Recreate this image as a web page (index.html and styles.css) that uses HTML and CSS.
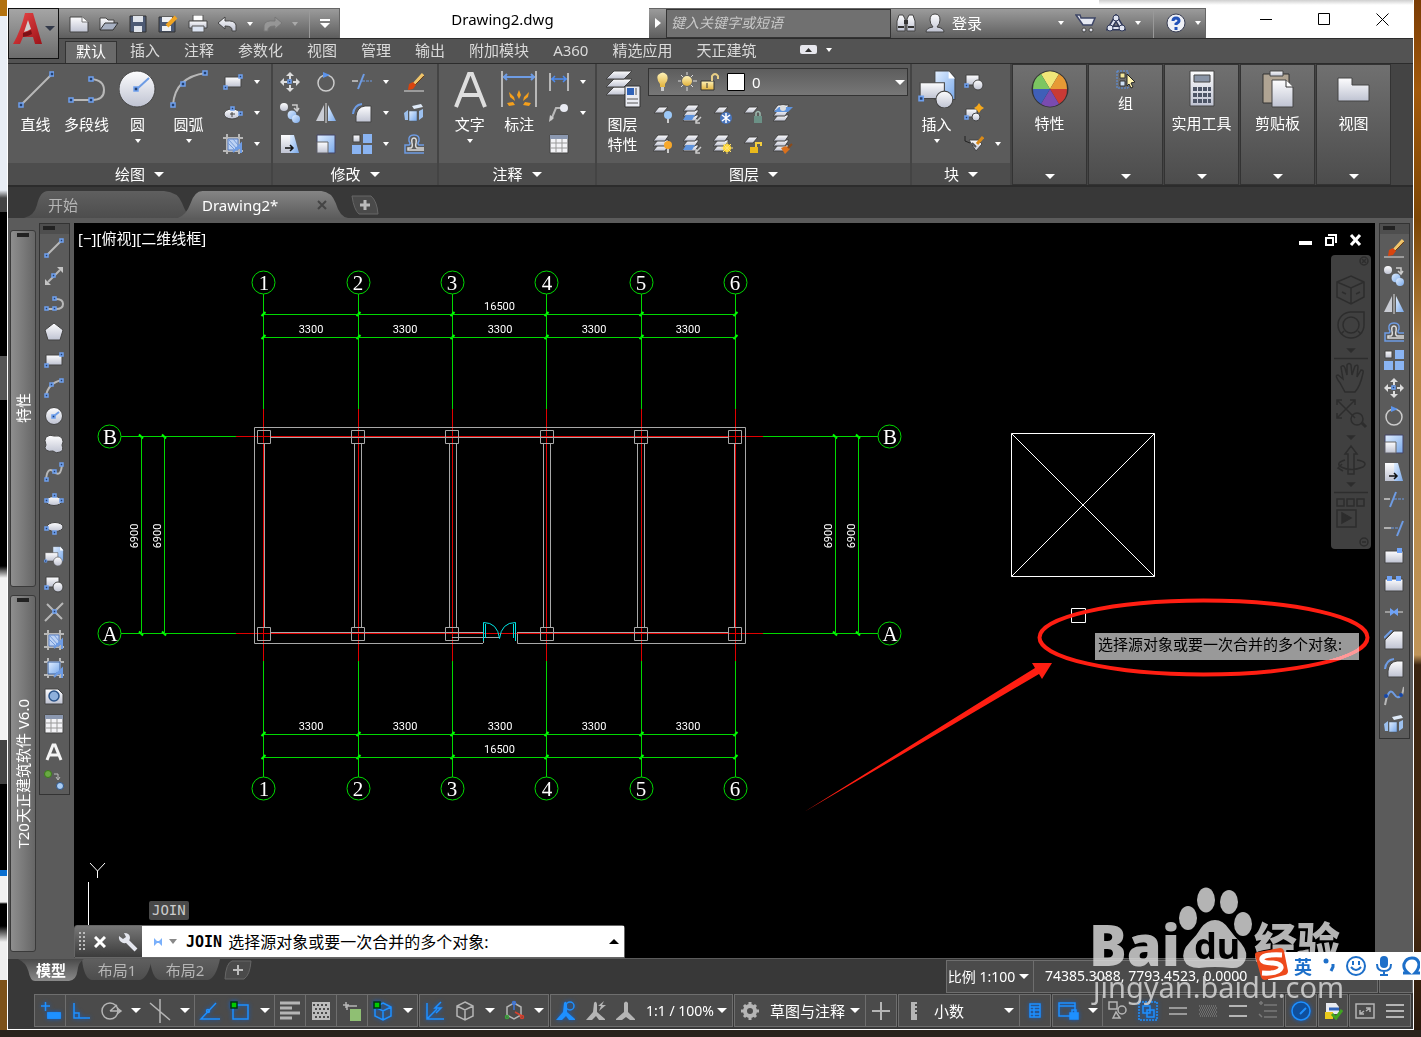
FILE: index.html
```html
<!doctype html>
<html lang="zh-CN">
<head>
    <meta charset="UTF-8">
    <title>Drawing2.dwg</title>
    <link rel="stylesheet" href="styles.css">
</head>
<body>
<!-- icon sprite -->
<svg class="sprite" aria-hidden="true">
    <defs>
        <linearGradient id="silver" x1="0" y1="0" x2="0" y2="1"><stop offset="0" stop-color="#fdfdfe"/><stop offset="1" stop-color="#bfc3d2"/></linearGradient>
        <linearGradient id="blue" x1="0" y1="0" x2="1" y2="1"><stop offset="0" stop-color="#e2efff"/><stop offset="1" stop-color="#78a8ea"/></linearGradient>
        <linearGradient id="gold" x1="0" y1="0" x2="0" y2="1"><stop offset="0" stop-color="#fff3b8"/><stop offset="1" stop-color="#e2b23c"/></linearGradient>
        <linearGradient id="red" x1="0" y1="0" x2="1" y2="1"><stop offset="0" stop-color="#ee4a4a"/><stop offset="1" stop-color="#9c1218"/></linearGradient>
        <linearGradient id="tabOn" x1="0" y1="0" x2="0" y2="1"><stop offset="0" stop-color="#858585"/><stop offset="1" stop-color="#5c5c5c"/></linearGradient>
        <linearGradient id="tabOff" x1="0" y1="0" x2="0" y2="1"><stop offset="0" stop-color="#5f5f5f"/><stop offset="1" stop-color="#4d4d4d"/></linearGradient>
        <linearGradient id="modelOn" x1="0" y1="0" x2="0" y2="1"><stop offset="0" stop-color="#4a4a4a"/><stop offset="1" stop-color="#8a8a8a"/></linearGradient>
    </defs>
    <!-- draw -->
    <symbol id="line" viewBox="0 0 20 20"><path class="w" d="M2 18L18 2"/><path class="h" d="M1 16h3v3h-3zM16 1h3v3h-3z"/></symbol>
    <symbol id="xline" viewBox="0 0 20 20"><path class="w" d="M4 16L16 4"/><path fill="#c4c4c4" d="M1 13v6h6zM19 1v6L13 1z"/><path class="h" d="M8 8h3v3h-3z"/></symbol>
    <symbol id="pline" viewBox="0 0 20 20"><path class="w" d="M2 15h10q7 0 7-5t-7-5"/><path class="h" d="M1 13h3v3h-3zM9 13h3v3h-3zM9 3h3v3h-3z"/></symbol>
    <symbol id="polygon" viewBox="0 0 20 20"><path class="s" d="M10 1l9 7-3 10H4L1 8z"/></symbol>
    <symbol id="rect" viewBox="0 0 20 20"><path class="s" d="M2 5h16v10H2z"/><path class="h" d="M1 14h3v3h-3zM16 3h3v3h-3z"/></symbol>
    <symbol id="arc" viewBox="0 0 20 20"><path class="w" d="M2 18Q4 5 18 2"/><path class="h" d="M1 16h3v3h-3zM6 5h3v3h-3zM16 1h3v3h-3z"/></symbol>
    <symbol id="circle" viewBox="0 0 20 20"><circle class="s" cx="10" cy="10" r="8.500"/><path class="b" d="M10 10l5-4"/><path class="h" d="M8 9h3v3h-3z"/></symbol>
    <symbol id="cloud" viewBox="0 0 20 20"><path class="s" d="M2 3q4-3 8-1 6-1 8 2 2 4 0 7 2 6-2 7-4 2-7-1-4 1-7-1-2-2 0-5-2-5 0-8z"/></symbol>
    <symbol id="spline" viewBox="0 0 20 20"><path class="w" d="M2 18Q3 5 9 9q8 8 9-7"/><path class="h" d="M1 16h3v3h-3zM9 8h3v3h-3zM16 1h3v3h-3z"/></symbol>
    <symbol id="ellipse" viewBox="0 0 20 20"><ellipse class="s" cx="10" cy="11" rx="8" ry="4.500"/><path class="h" d="M1 9h3v3h-3zM16 9h3v3h-3zM9 4h3v3h-3z"/></symbol>
    <symbol id="centre" viewBox="0 0 20 20"><ellipse class="s" cx="9" cy="11" rx="8" ry="5"/><path class="h" d="M8 4h3v3h-3zM16 9h3v3h-3z"/><path stroke="#444" d="M7 11h5M9 9v5"/></symbol>
    <symbol id="earc" viewBox="0 0 20 20"><ellipse class="s" cx="11" cy="9" rx="8" ry="4.500"/><path class="h" d="M1 9h3v3h-3zM9 13h3v3h-3z"/></symbol>
    <symbol id="insert" viewBox="0 0 36 36"><path fill="url(#blue)" stroke="#444" d="M16 1h13l6 6v21H16z"/><path fill="#fff" d="M29 1v7h6z"/><path class="s" d="M2 12h23v15H2z"/><circle class="s" cx="25" cy="28" r="8"/><path class="h" d="M1 25h4v4h-4z"/></symbol>
    <symbol id="block" viewBox="0 0 20 20"><path class="s" d="M2 3h13v10H2z"/><circle class="s" cx="14" cy="13" r="5"/><path class="h" d="M1 12h3v3h-3z"/></symbol>
    <symbol id="newblock" viewBox="0 0 20 20"><path class="s" d="M2 6h11v8H2z"/><circle class="s" cx="12" cy="14" r="4"/><path class="h" d="M1 13h3v3h-3z"/><path fill="#f6a91c" d="M15 0l2 3 3 2-3 2-2 3-2-3-3-2 3-2z"/></symbol>
    <symbol id="attr" viewBox="0 0 20 20"><path class="s" d="M5 6l9 0 4 4-6 7z"/><path fill="none" stroke="#222" d="M1 2v5l5 2"/><path stroke="#555" stroke-width="2" d="M8 9l4 4"/><path stroke="#d98a18" stroke-width="3" d="M19 3l-6 7"/></symbol>
    <symbol id="point" viewBox="0 0 20 20"><path class="w" d="M1 19L19 1M3 2l15 15"/><path class="h" d="M9 8h3v3h-3z"/></symbol>
    <symbol id="hatch" viewBox="0 0 20 20"><path class="w" d="M4 0v20M16 0v20M0 4h20M0 17h20"/><path fill="#bcd2f4" stroke="#587fc4" d="M5 5h10v11H5z"/><path stroke="#7399d8" d="M5 9l7 7M5 5l10 11M10 5l5 6"/><path class="b" d="M10 18l8-8v9M12 14l7 0"/></symbol>
    <symbol id="gradient" viewBox="0 0 20 20"><path class="w" d="M4 0v20M16 0v20M0 4h20M0 17h20"/><path fill="url(#blue)" stroke="#395e9c" d="M4 4h12v12H4z"/><path class="b" d="M10 19l8-8v9M12 15h7"/></symbol>
    <symbol id="region" viewBox="0 0 20 20"><path class="s" d="M1 3h13l5 5v10H1z"/><circle cx="10" cy="10" r="5" fill="#8eb0dc" stroke="#2c5489" stroke-width="1.500"/></symbol>
    <symbol id="table" viewBox="0 0 20 20"><path fill="#f3f3f6" stroke="#444" d="M1 1h18v18H1z"/><path fill="#8b98b0" d="M1 1h18v4H1z"/><path stroke="#999" d="M1 9h18M1 14h18M7 5v14M13 5v14"/></symbol>
    <symbol id="mtext" viewBox="0 0 20 20"><path fill="none" stroke="#f4f4f4" stroke-width="3" d="M3 18L9 3h2l6 15M6 13h8"/></symbol>
    <symbol id="addsel" viewBox="0 0 20 20"><circle cx="4" cy="4" r="3.500" fill="#6aa943" stroke="#3b7a1c"/><circle cx="16" cy="16" r="3.500" fill="#a9cdf5" stroke="#2c5489"/><path fill="none" stroke="#bbb" d="M10 4h4v5M12 7l2 3 2-3"/></symbol>
    <!-- modify -->
    <symbol id="erase" viewBox="0 0 20 20"><path stroke="#f0c56a" stroke-width="3" d="M19 2l-9 10"/><path stroke="#6e3d12" d="M20 4l-9 9"/><path fill="#d8440e" d="M5 12l4-2 3 3-3 4-5 1z"/><path stroke="#ddd" d="M0 19h20"/></symbol>
    <symbol id="copy" viewBox="0 0 20 20"><circle cx="4" cy="4" r="4" fill="url(#silver)"/><circle cx="12" cy="12" r="5" fill="url(#blue)" stroke="#555"/><circle cx="16" cy="16" r="4" fill="url(#blue)"/><path fill="none" stroke="#ccc" stroke-width="1.500" d="M12 2h5v5M14 5l3 3 2-3"/></symbol>
    <symbol id="mirror" viewBox="0 0 20 20"><path fill="#c9ccd4" d="M8 2v16H0z"/><path fill="url(#blue)" d="M12 2v16h8z"/><path stroke="#ddd" d="M10 0v20"/></symbol>
    <symbol id="offset" viewBox="0 0 20 20"><path fill="none" stroke="#6e9ce4" stroke-width="1.500" d="M20 19H1v-8h4q2-1 0-4-1-6 5-6t5 6q-2 3 0 4h5"/><path fill="none" stroke="#ddd" stroke-width="1.500" d="M20 16H4v-2h3q2-1 1-5-1-5 2-5t2 5q-1 4 1 5h7"/></symbol>
    <symbol id="array" viewBox="0 0 20 20"><path class="s" d="M1 1h7v7H1z"/><path fill="#8ab4f2" d="M11 0h9v9h-9zM0 11h9v9H0zM11 11h9v9h-9z"/></symbol>
    <symbol id="move" viewBox="0 0 20 20"><path fill="#ddd" d="M10 0l4 4h-3v3H9V4H6zM10 20l4-4h-3v-3H9v3H6zM0 10l4-4v3h3v2H4v3zM20 10l-4-4v3h-3v2h3v3z"/><path class="h" d="M8 8h3v3h-3z"/></symbol>
    <symbol id="rotate" viewBox="0 0 20 20"><circle cx="10" cy="11" r="8" fill="none" stroke="#ccc" stroke-width="1.500"/><path fill="#5b93ea" d="M7 0l7 3-7 3z"/></symbol>
    <symbol id="scale" viewBox="0 0 20 20"><path fill="url(#blue)" stroke="#446" d="M1 1h18v18H1z"/><path fill="url(#silver)" stroke="#666" d="M1 8h11v11H1z"/></symbol>
    <symbol id="stretch" viewBox="0 0 20 20"><path fill="url(#silver)" d="M1 1h9v18H1z"/><path fill="url(#blue)" d="M10 1h4l5 18h-9z"/><path fill="none" stroke="#111" stroke-width="1.500" d="M5 14h8M10 11l3 3-3 3"/></symbol>
    <symbol id="trim" viewBox="0 0 20 20"><path stroke="#ccc" stroke-width="1.500" d="M0 9h6"/><path class="b" d="M6 17L12 2"/><path stroke="#6e9ce4" stroke-dasharray="3 1" d="M10 9h10"/></symbol>
    <symbol id="extend" viewBox="0 0 20 20"><path stroke="#ccc" stroke-width="1.500" d="M0 10h7"/><path class="b" d="M13 18L19 3"/><path stroke="#6e9ce4" stroke-dasharray="3 1" d="M7 10h8"/></symbol>
    <symbol id="breakpt" viewBox="0 0 20 20"><path class="s" d="M1 5h18v12H1z"/><path fill="#6fa3f7" d="M13 2h5v5h-5z"/></symbol>
    <symbol id="break" viewBox="0 0 20 20"><path class="s" d="M1 5h18v12H1z"/><path fill="#6fa3f7" d="M3 2h5v5H3zM12 2h5v5h-5z"/></symbol>
    <symbol id="join" viewBox="0 0 20 20"><path stroke="#ddd" d="M1 10h18"/><path fill="#6fa3f7" d="M6 6l4 3 4-3v8l-4-3-4 3z"/></symbol>
    <symbol id="chamfer" viewBox="0 0 20 20"><path class="s" d="M1 19v-9l9-9h9v18z"/><path class="b" d="M0 8l8-8"/></symbol>
    <symbol id="fillet" viewBox="0 0 20 20"><path class="s" d="M4 19v-6q1-9 9-10h6v16z"/><path class="b" d="M1 11Q2 2 10 1"/></symbol>
    <symbol id="blend" viewBox="0 0 20 20"><path class="w" d="M1 19l2-9M18 9l2-8"/><path class="b" d="M3 11Q6 2 10 8t7 1"/><circle cx="2" cy="10" r="2" fill="#1747a8"/><circle cx="17" cy="9" r="2" fill="#1747a8"/></symbol>
    <symbol id="explode" viewBox="0 0 20 20"><path fill="#dfeaf8" d="M8 3l9-2 2 3-9 2z"/><path fill="url(#blue)" stroke="#456" stroke-width=".5" d="M5 8h8v10H5z"/><path fill="#9cc0ee" d="M15 8l4-2v8l-4 3zM0 10l4-3v10H1z"/></symbol>
    <!-- annotate, layers -->
    <symbol id="dim" viewBox="0 0 20 20"><path class="w" d="M1 1v18M19 1v18"/><path fill="none" stroke="#4d8cf0" stroke-width="1.500" d="M2 7h16M6 4L3 7l3 3M14 4l3 3-3 3"/></symbol>
    <symbol id="leader" viewBox="0 0 20 20"><path class="w" d="M2 17L7 5h6"/><path fill="#ccc" d="M0 19l1-7 4 3z"/><circle cx="15" cy="5" r="4" fill="#e8eaf2"/></symbol>
    <symbol id="sheet" viewBox="0 0 20 20"><path class="s" d="M6 3h9l-5 6H1z"/></symbol>
    <symbol id="sheets" viewBox="0 0 20 20"><path class="s" d="M5 11h11l-4 6H0z"/><path class="s" d="M5 6h11l-4 6H0z"/><path class="s" d="M5 1h11l-4 6H0z"/></symbol>
    <symbol id="layoff" viewBox="0 0 20 20"><use href="#sheet"/><path stroke="#ccc" stroke-width="2" d="M15 12v7"/><circle cx="15" cy="11" r="4" fill="#9cc8f8"/></symbol>
    <symbol id="layiso" viewBox="0 0 20 20"><use href="#sheets"/><path fill="#5f94dd" d="M3 11h9l-3 5H0z"/><path stroke="#ccc" stroke-width="1.500" d="M18 13l-5 5M13 15v4h4" fill="none"/></symbol>
    <symbol id="layfrz" viewBox="0 0 20 20"><use href="#sheet"/><circle cx="13" cy="14" r="6" fill="#4975bd"/><path stroke="#fff" stroke-width="1.500" d="M13 9v10M9 11l8 6M17 11l-8 6"/></symbol>
    <symbol id="laylck" viewBox="0 0 20 20"><use href="#sheet"/><path fill="#6b9186" d="M11 12h8v7h-8z"/><path fill="none" stroke="#9dbab0" stroke-width="1.500" d="M13 12V9q2-3 4 0v3"/></symbol>
    <symbol id="laymake" viewBox="0 0 20 20"><use href="#sheets"/><path fill="#5f94dd" d="M6 3h14l-5 5H1z"/><circle cx="10" cy="4" r="3" fill="#ddd"/></symbol>
    <symbol id="layon" viewBox="0 0 20 20"><use href="#sheets"/><path stroke="#ccc" stroke-width="2" d="M15 12v7"/><circle cx="15" cy="11" r="4" fill="#f8a82a"/></symbol>
    <symbol id="laythw" viewBox="0 0 20 20"><use href="#sheets"/><circle cx="14" cy="14" r="4" fill="#ffd51e"/><path stroke="#ffe27a" d="M14 8v12M8 14h12M10 10l8 8M18 10l-8 8"/></symbol>
    <symbol id="layulk" viewBox="0 0 20 20"><use href="#sheet"/><path fill="#e9b91c" d="M7 13h8v6H7z"/><path fill="none" stroke="#f3cd3d" stroke-width="2" d="M13 13V9h5v3"/></symbol>
    <symbol id="laymch" viewBox="0 0 20 20"><use href="#sheets"/><path fill="#d9701c" d="M8 14l5-2 4 3-5 5z"/><path stroke="#8a4a1a" stroke-width="2" d="M15 14l4-4"/></symbol>
</svg>

<div class="window">
    <header class="titlebar">
        <button class="app-button" aria-label="应用程序">
            <svg width="31" height="34" viewBox="0 0 31 34"><path fill="url(#red)" d="M12 1h8l9 31h-7l-2-7H10L7 32H0Q8 18 12 1z"/><path fill="#7d1016" d="M10 25q6-1 9-3l-1-4q-3 2-8 3z"/><path fill="#cfcfcf" d="M15 8l3 9q-3 2-7 3z"/></svg>
            <i class="caret dark"></i>
        </button>
        <div class="qat">
            <button aria-label="新建"><svg width="20" height="18"><path class="s" d="M1 2h12l6 5v10H1z"/><path fill="#fff" stroke="#777" d="M13 2v5h6"/></svg></button>
            <button aria-label="打开"><svg width="20" height="18"><path class="s" d="M1 15V3h6l2 2h6v3"/><path fill="#a7b0c2" stroke="#333" d="M1 15L6 8h13l-5 7z"/></svg></button>
            <button aria-label="保存"><svg width="20" height="18"><path fill="#4d5a74" stroke="#333" d="M2 1h16v16H2z"/><path fill="#dfe3ea" d="M5 1h10v6H5zM6 11h8v6H6z"/></svg></button>
            <button aria-label="另存为"><svg width="20" height="18"><path fill="#4d5a74" stroke="#333" d="M1 2h16v15H1z"/><path fill="#eef0f4" d="M4 2h10v5H4zM4 11h9v5H4z"/><path stroke="#f0a422" stroke-width="4" d="M18 2l-9 9"/></svg></button>
            <button aria-label="打印"><svg width="20" height="18"><path fill="#fff" stroke="#555" d="M5 0h10v6H5z"/><path class="s" d="M1 6h18v7H1z"/><path fill="#dce4f2" stroke="#555" d="M4 11h12v6H4z"/></svg></button>
            <button aria-label="放弃"><svg width="20" height="18"><path class="s" d="M1 8l7-6v4q10-1 11 4v6h-4q1-5-7-5v3z"/></svg></button>
            <button class="drop" aria-label="放弃列表"><i class="caret small"></i></button>
            <button aria-label="重做"><svg width="20" height="18"><path fill="#969696" stroke="#777" d="M19 8l-7-6v4Q2 5 1 10v6h4Q4 11 12 11v3z"/></svg></button>
            <button class="drop" aria-label="重做列表"><i class="caret small dim"></i></button>
            <button class="qat-more" aria-label="自定义"><svg width="12" height="12"><path fill="#fff" d="M1 1h10v2H1zM1 5h10l-5 5z"/></svg></button>
        </div>
        <h1 class="title">Drawing2.dwg</h1>
        <div class="info">
            <button class="info-toggle" aria-label="展开"><svg width="6" height="10"><path fill="#fff" d="M0 0l6 5-6 5z"/></svg></button>
            <input type="search" placeholder="键入关键字或短语" aria-label="搜索">
            <button aria-label="查找"><svg width="20" height="20"><path class="s" d="M3 2h4l2 4v12H1V8zM13 2h4l2 6v10h-8V6z"/><path fill="#333" d="M8 7h4v4H8zM2 13h6v2H2zM12 13h6v2h-6z"/></svg></button>
            <button class="login"><svg width="20" height="20"><path class="s" d="M1 19q0-4 7-5-3-3-3-7 0-6 5-6t5 6q0 4-3 7 7 1 7 5z"/></svg>登录<i class="caret small"></i></button>
            <button aria-label="应用商店"><svg width="22" height="20"><path fill="#e6e9f2" stroke="#3d4566" stroke-width="1.500" d="M1 2h4l1 3h14l-3 7H8z"/><circle cx="9" cy="17" r="2" class="s"/><circle cx="16" cy="17" r="2" class="s"/></svg></button>
            <button aria-label="保持连接"><svg width="20" height="18"><path fill="none" stroke="#30395a" stroke-width="5" d="M10 4L4 14h12z"/><path fill="none" stroke="#dfe3f0" stroke-width="2" d="M10 4L4 14h12z"/><circle cx="10" cy="4" r="3" fill="#dfe3f0" stroke="#30395a"/><circle cx="4" cy="14" r="3" fill="#dfe3f0" stroke="#30395a"/><circle cx="16" cy="14" r="3" fill="#dfe3f0" stroke="#30395a"/></svg></button>
            <button class="drop" aria-label="连接列表"><i class="caret small"></i></button>
            <button class="help" aria-label="帮助"><svg width="20" height="20"><circle cx="10" cy="10" r="9" fill="#eef0f6" stroke="#3a3f55"/><path fill="none" stroke="#2352b8" stroke-width="3" d="M7 8q0-3 3-3t3 3q0 1-3 3v1M10 14v3"/></svg></button>
            <button class="drop" aria-label="帮助列表"><i class="caret small"></i></button>
        </div>
        <div class="winbtns">
            <button aria-label="最小化"><svg width="13" height="13"><path stroke="#000" d="M0 6.500h12"/></svg></button>
            <button aria-label="最大化"><svg width="13" height="13"><path fill="none" stroke="#000" d="M.5.5h11v11H.5z"/></svg></button>
            <button aria-label="关闭"><svg width="13" height="13"><path stroke="#000" d="M.5.5l12 12M12.500.5l-12 12"/></svg></button>
        </div>
    </header>

    <nav class="ribbon-tabs">
        <button class="selected">默认</button>
        <button>插入</button>
        <button>注释</button>
        <button>参数化</button>
        <button>视图</button>
        <button>管理</button>
        <button>输出</button>
        <button>附加模块</button>
        <button>A360</button>
        <button>精选应用</button>
        <button>天正建筑</button>
        <button class="fold" aria-label="最小化功能区"><svg width="18" height="10"><rect width="17" height="9" rx="2" fill="#e8e8ee"/><path fill="#333" d="M5 7l3.500-4L12 7z"/></svg><i class="caret small"></i></button>
    </nav>

    <div class="ribbon">
        <section class="panel draw">
            <div class="tools">
                <button class="big"><svg width="36" height="38"><path class="w" d="M3 35L34 4"/><path class="h" d="M1 33h4v4H1zM32 2h4v4h-4z"/></svg>直线</button>
                <button class="big"><svg width="38" height="38"><path class="w" d="M2 30h22q12 0 12-10t-13-11"/><path class="h" d="M1 28h4v4H1zM21 28h4v4h-4zM21 7h4v4h-4z"/></svg>多段线</button>
                <button class="big"><svg width="38" height="38"><circle class="s" cx="18" cy="19" r="18"/><path class="b" d="M18 19L30 8"/><path class="h" d="M15 17h4v4h-4z"/></svg>圆<i class="caret small"></i></button>
                <button class="big"><svg width="38" height="38"><path class="w" d="M3 35Q5 7 36 3"/><path class="h" d="M1 33h4v4H1zM11 12h4v4h-4zM33 1h4v4h-4z"/></svg>圆弧<i class="caret small"></i></button>
                <div class="small-grid">
                    <button aria-label="矩形"><svg><use href="#rect"/></svg></button><button class="drop" aria-label="矩形列表"><i class="caret small"></i></button>
                    <button aria-label="椭圆"><svg><use href="#centre"/></svg></button><button class="drop" aria-label="椭圆列表"><i class="caret small"></i></button>
                    <button aria-label="图案填充"><svg><use href="#hatch"/></svg></button><button class="drop" aria-label="填充列表"><i class="caret small"></i></button>
                </div>
            </div>
            <button class="panel-title">绘图<i class="caret"></i></button>
        </section>
        <section class="panel modify">
            <div class="tools">
                <div class="small-grid">
                    <button aria-label="移动"><svg><use href="#move"/></svg></button>
                    <button aria-label="旋转"><svg><use href="#rotate"/></svg></button>
                    <button aria-label="修剪"><svg><use href="#trim"/></svg></button><button class="drop" aria-label="修剪列表"><i class="caret small"></i></button>
                    <button aria-label="删除"><svg><use href="#erase"/></svg></button>
                    <button aria-label="复制"><svg><use href="#copy"/></svg></button>
                    <button aria-label="镜像"><svg><use href="#mirror"/></svg></button>
                    <button aria-label="圆角"><svg><use href="#fillet"/></svg></button><button class="drop" aria-label="圆角列表"><i class="caret small"></i></button>
                    <button aria-label="分解"><svg><use href="#explode"/></svg></button>
                    <button aria-label="拉伸"><svg><use href="#stretch"/></svg></button>
                    <button aria-label="缩放"><svg><use href="#scale"/></svg></button>
                    <button aria-label="阵列"><svg><use href="#array"/></svg></button><button class="drop" aria-label="阵列列表"><i class="caret small"></i></button>
                    <button aria-label="偏移"><svg><use href="#offset"/></svg></button>
                </div>
            </div>
            <button class="panel-title">修改<i class="caret"></i></button>
        </section>
        <section class="panel annotate">
            <div class="tools">
                <button class="big"><svg width="36" height="38"><path fill="none" stroke="#dedede" stroke-width="4" d="M4 37L17 4h3l13 33M9 25h19"/></svg>文字<i class="caret small"></i></button>
                <button class="big"><svg width="36" height="38"><path class="w" d="M1 1v36M35 1v36"/><path class="b" d="M2 7h32M6 4L3 7l3 3M30 4l3 3-3 3"/><path fill="#f5a01c" d="M18 20l2 5-2 4-2-4zM8 22l5 5 1 4-5-4zM28 22l-5 5-1 4 5-4zM6 33l6-1 2 3-6 1zM30 33l-6-1-2 3 6 1z"/></svg>标注</button>
                <div class="small-grid">
                    <button aria-label="线性"><svg><use href="#dim"/></svg></button><button class="drop" aria-label="线性列表"><i class="caret small"></i></button>
                    <button aria-label="引线"><svg><use href="#leader"/></svg></button><button class="drop" aria-label="引线列表"><i class="caret small"></i></button>
                    <button aria-label="表格"><svg><use href="#table"/></svg></button>
                </div>
            </div>
            <button class="panel-title">注释<i class="caret"></i></button>
        </section>
        <section class="panel layers">
            <div class="tools">
                <button class="big"><svg width="36" height="38"><path class="s" d="M9 17h18l-8 8H1z"/><path class="s" d="M9 9h18l-8 8H1z"/><path class="s" d="M9 1h18l-8 8H1z"/><path fill="#e9ebf2" stroke="#333" d="M20 16h15v21H20z"/><path fill="#2f62b8" d="M22 18h7v7h-7z"/><path stroke="#555" d="M22 29h11M22 33h11M31 18v7"/></svg><span>图层<br>特性</span></button>
                <div class="layer-tools">
                    <div class="layer-box">
                        <svg width="96" height="20"><path fill="url(#gold)" d="M4 12Q0 7 2 3q5-5 9 0 2 5-2 9v3H4z"/><path stroke="#ccc" stroke-width="3" d="M6.500 15v4"/><circle cx="31" cy="9" r="5" fill="url(#gold)"/><path stroke="#ddd" d="M31 0v3M31 15v4M22 9h3M37 9h4M25 3l2 2M37 3l-2 2M25 15l2-2M37 15l-2-2"/><path fill="url(#gold)" stroke="#333" d="M45 9h13v9H45z"/><path fill="none" stroke="#e9cf86" stroke-width="2" d="M56 9V4q3-4 6 0v3"/><path stroke="#333" d="M51 11v5"/><path fill="#fff" stroke="#000" d="M71.500 1.500h17v17h-17z"/></svg>
                        <select aria-label="图层"><option>0</option></select>
                        <i class="caret"></i>
                    </div>
                    <div class="layer-grid">
                        <button aria-label="关"><svg><use href="#layoff"/></svg></button>
                        <button aria-label="隔离"><svg><use href="#layiso"/></svg></button>
                        <button aria-label="冻结"><svg><use href="#layfrz"/></svg></button>
                        <button aria-label="锁定"><svg><use href="#laylck"/></svg></button>
                        <button aria-label="置为当前"><svg><use href="#laymake"/></svg></button>
                        <button aria-label="打开所有图层"><svg><use href="#layon"/></svg></button>
                        <button aria-label="取消隔离"><svg><use href="#layiso"/></svg></button>
                        <button aria-label="解冻"><svg><use href="#laythw"/></svg></button>
                        <button aria-label="解锁"><svg><use href="#layulk"/></svg></button>
                        <button aria-label="匹配图层"><svg><use href="#laymch"/></svg></button>
                    </div>
                </div>
            </div>
            <button class="panel-title">图层<i class="caret"></i></button>
        </section>
        <section class="panel blocks">
            <div class="tools">
                <button class="big"><svg width="38" height="38"><use href="#insert"/></svg>插入<i class="caret small"></i></button>
                <div class="small-grid">
                    <button aria-label="创建块"><svg><use href="#block"/></svg></button><span></span>
                    <button aria-label="编辑块"><svg><use href="#newblock"/></svg></button><span></span>
                    <button aria-label="编辑属性"><svg><use href="#attr"/></svg></button><button class="drop" aria-label="属性列表"><i class="caret small"></i></button>
                </div>
            </div>
            <button class="panel-title">块<i class="caret"></i></button>
        </section>
        <button class="folded"><svg width="38" height="38" viewBox="-19 -19 38 38"><circle r="18.500" fill="#333"/><path fill="#f1e678" d="M0 0L-9-15A17 17 0 0 1 9-15z"/><path fill="#e79a35" d="M0 0L9-15A17 17 0 0 1 17 0z"/><path fill="#c93a35" d="M0 0h17A17 17 0 0 1 9 15z"/><path fill="#7a4bb0" d="M0 0L9 15A17 17 0 0 1-9 15z"/><path fill="#3f5fb8" d="M0 0L-9 15A17 17 0 0 1-17 0z"/><path fill="#7cc661" d="M0 0h-17A17 17 0 0 1-9-15z"/></svg>特性<i class="caret"></i></button>
        <button class="folded short"><svg width="20" height="20"><path fill="none" stroke="#5b93ea" stroke-dasharray="2 1" d="M1 1h11v17H1z"/><path fill="#f3e79a" stroke="#333" d="M4 3h5v5H4z"/><path fill="#cfe0f4" stroke="#333" d="M4 11h5v5H4z"/><path fill="#fff3b0" stroke="#222" d="M11 4l8 8-4 1 2 4-2 1-2-4-2 2z"/></svg>组<i class="caret"></i></button>
        <button class="folded"><svg width="28" height="38"><path class="s" d="M2 1h24v35H2z"/><path fill="#8994a6" stroke="#444" d="M6 5h16v7H6z"/><path stroke="#4d5566" stroke-width="4" stroke-dasharray="4 1" d="M5 19h18M5 25h18M5 31h18"/></svg>实用工具<i class="caret"></i></button>
        <button class="folded"><svg width="32" height="38"><path fill="#b0a493" stroke="#333" d="M1 4h26v29H1z"/><path class="s" d="M8 1h13v5H8z"/><path class="s" d="M10 10h14l7 7v20H10z"/><path fill="#fff" stroke="#333" d="M24 10v7h7"/></svg>剪贴板<i class="caret"></i></button>
        <button class="folded"><svg width="34" height="38"><path class="s" d="M1 8h14v7h17v16H1z"/></svg>视图<i class="caret"></i></button>
    </div>

    <div class="doc-tabs">
        <button class="doc-tab"><svg viewBox="0 0 166 27" preserveAspectRatio="none"><path fill="url(#tabOff)" d="M0 27Q10 25 13 14 16 0 24 0H140Q154 1 158 12 162 22 166 27z"/></svg><span>开始</span></button>
        <button class="doc-tab selected"><svg viewBox="0 0 166 27" preserveAspectRatio="none"><path fill="url(#tabOn)" d="M0 27Q8 24 12 13 16 0 24 0H140Q150 1 154 12 158 26 166 27z"/></svg><span>Drawing2*</span><svg class="x" viewBox="0 0 10 10"><path stroke="#444" stroke-width="2" d="M1 1l8 8M9 1L1 9"/></svg></button>
        <button class="doc-add" aria-label="新图形"><svg width="28" height="20"><path fill="#4a4a4a" stroke="#666" d="M1 1h19q6 5 7 18H8Q3 15 1 1z"/><path stroke="#bbb" stroke-width="3" d="M9 10h10M14 5v10"/></svg></button>
    </div>

    <div class="work">
        <aside class="palettes">
            <div class="palette"><span>特性</span></div>
            <div class="palette"><span>T20天正建筑软件 V6.0</span></div>
        </aside>
        <div class="toolbar left">
            <button aria-label="直线"><svg><use href="#line"/></svg></button>
            <button aria-label="构造线"><svg><use href="#xline"/></svg></button>
            <button aria-label="多段线"><svg><use href="#pline"/></svg></button>
            <button aria-label="多边形"><svg><use href="#polygon"/></svg></button>
            <button aria-label="矩形"><svg><use href="#rect"/></svg></button>
            <button aria-label="圆弧"><svg><use href="#arc"/></svg></button>
            <button aria-label="圆"><svg><use href="#circle"/></svg></button>
            <button aria-label="修订云线"><svg><use href="#cloud"/></svg></button>
            <button aria-label="样条曲线"><svg><use href="#spline"/></svg></button>
            <button aria-label="椭圆"><svg><use href="#ellipse"/></svg></button>
            <button aria-label="椭圆弧"><svg><use href="#earc"/></svg></button>
            <button aria-label="插入块"><svg><use href="#insert"/></svg></button>
            <button aria-label="创建块"><svg><use href="#block"/></svg></button>
            <button aria-label="点"><svg><use href="#point"/></svg></button>
            <button aria-label="图案填充"><svg><use href="#hatch"/></svg></button>
            <button aria-label="渐变色"><svg><use href="#gradient"/></svg></button>
            <button aria-label="面域"><svg><use href="#region"/></svg></button>
            <button aria-label="表格"><svg><use href="#table"/></svg></button>
            <button aria-label="多行文字"><svg><use href="#mtext"/></svg></button>
            <button aria-label="添加选定对象"><svg><use href="#addsel"/></svg></button>
        </div>

        <main class="canvas">
            <svg class="drawing" viewBox="74 223 1301 735" preserveAspectRatio="xMinYMin meet">
                <defs>
                    <!-- one numbered axis: bubbles, leads and centre line -->
                    <g id="axis">
                        <circle class="green" cx="0" cy="282.500" r="11.500"/>
                        <circle class="green" cx="0" cy="788.500" r="11.500"/>
                        <path class="green" d="M0 294v115M0 661v116"/>
                        <path class="red" d="M0 409v252"/>
                        <path class="tick" d="M-2 316l4-4M-2 339l4-4M-2 736l4-4M-2 759l4-4"/>
                    </g>
                    <g id="row">
                        <circle class="green" cx="109.500" cy="0" r="11.500"/>
                        <circle class="green" cx="889.500" cy="0" r="11.500"/>
                        <path class="green" d="M121 0h115M763 0h115"/>
                        <path class="red" d="M236 0h527"/>
                        <path class="tick" d="M139-2l4 4M162-2l4 4M833-2l4 4M856-2l4 4"/>
                    </g>
                    <path id="column" class="wall" d="M-6.500 430.500h13v13h-13zM-6.500 627.500h13v13h-13z"/>
                    <path id="partition" class="wall" d="M-3.500 444v183M3.500 444v183"/>
                </defs>
                <use href="#axis" x="263.500"/><use href="#axis" x="358.500"/><use href="#axis" x="452.500"/>
                <use href="#axis" x="546.500"/><use href="#axis" x="641.500"/><use href="#axis" x="735.500"/>
                <use href="#row" y="436.500"/><use href="#row" y="633.500"/>
                <path class="green" d="M264 314.500h471M264 337.500h471M264 734.500h471M264 757.500h471"/>
                <path class="green" d="M141.500 437v197M164.500 437v197M835.500 437v197M858.500 437v197"/>
                <path class="wall" d="M483 643.500H254.500V427.500H745.500V643.500H517.500v-10M483.500 643v-10"/>
                <path class="wall" d="M264.500 444v183M734.500 444v183M270 437.500h459M270 632.500h213M517 632.500h212M452 637.500h48"/>
                <use href="#column" x="264"/><use href="#column" x="358"/><use href="#column" x="452"/>
                <use href="#column" x="547"/><use href="#column" x="641"/><use href="#column" x="735"/>
                <use href="#partition" x="358"/><use href="#partition" x="453"/><use href="#partition" x="547"/><use href="#partition" x="641"/>
                <path class="cyan" d="M483.500 641V622.500q14 0 16 16 2-16 16-16V641M485.500 624v14M513.500 624v14"/>
                <g class="dims">
                    <text x="499.500" y="310">16500</text><text x="499.500" y="753">16500</text>
                    <text x="311" y="333">3300</text><text x="405" y="333">3300</text><text x="500" y="333">3300</text><text x="594" y="333">3300</text><text x="688" y="333">3300</text>
                    <text x="311" y="730">3300</text><text x="405" y="730">3300</text><text x="500" y="730">3300</text><text x="594" y="730">3300</text><text x="688" y="730">3300</text>
                    <text transform="translate(138 536) rotate(-90)">6900</text><text transform="translate(161 536) rotate(-90)">6900</text>
                    <text transform="translate(832 536) rotate(-90)">6900</text><text transform="translate(855 536) rotate(-90)">6900</text>
                </g>
                <g class="bubbles">
                    <text x="264" y="290">1</text><text x="358" y="290">2</text><text x="452" y="290">3</text><text x="547" y="290">4</text><text x="641" y="290">5</text><text x="735" y="290">6</text>
                    <text x="264" y="796">1</text><text x="358" y="796">2</text><text x="452" y="796">3</text><text x="547" y="796">4</text><text x="641" y="796">5</text><text x="735" y="796">6</text>
                    <text x="110" y="444">B</text><text x="890" y="444">B</text><text x="110" y="641">A</text><text x="890" y="641">A</text>
                </g>
                <path class="white" d="M1011.500 433.500h143v143h-143zl143 143M1154.500 433.500l-143 143M1071.500 608.500h14v14h-14z"/>
                <!-- ucs -->
                <path class="white" d="M88.500 882v50M90 863l7.500 8 7.500-8M97.500 871v7"/>
                <g class="mark">
                    <ellipse cx="1203.500" cy="637.500" rx="164" ry="37"/>
                    <path d="M804 812l231-144-3-5h20l-10 16-3-5z"/>
                </g>
            </svg>
            <span class="view-label">[−][俯视][二维线框]</span>
            <div class="tip">选择源对象或要一次合并的多个对象:</div>
            <div class="view-btns">
                <button aria-label="最小化"><svg width="14" height="12"><path fill="#fff" d="M0 7h13v4H0z"/></svg></button>
                <button aria-label="还原"><svg width="14" height="12"><path fill="none" stroke="#fff" stroke-width="2" d="M2 4h7v7H2zM4 1h8v8"/></svg></button>
                <button aria-label="关闭"><svg width="14" height="12"><path stroke="#fff" stroke-width="3" d="M2 1l9 10M11 1L2 11"/></svg></button>
            </div>
            <div class="navbar">
                <svg width="40" height="294"><circle cx="33" cy="6" r="4"/><path d="M31 4l4 4M35 4l-4 4"/>
                    <path d="M6 27l14-6 13 6v15l-13 7-14-7zM6 27l14 6 13-6M20 33v16M11 37l4 2M25 39l4-2"/>
                    <path d="M20 57h13v13a13 13 0 1 1-13-13z"/><circle cx="20" cy="70" r="8"/><path d="M13 76l-3 3M27 76l3 3"/>
                    <path class="f" d="M17 94h6l-3 3z"/><path d="M3 103.500h34"/>
                    <path d="M9 128q-6-8-2-8l5 4-2-12q2-3 4 1l2 7v-10q2-3 4 0l1 10 3-9q3-2 3 1l-1 10 4-7q3 0 2 3-3 14-8 19h-10z"/>
                    <path d="M6 145l18 18M24 145L6 163M6 150v-5h5M19 145h5v5M6 158v5h5"/><circle cx="26" cy="164" r="6"/><path d="M31 168l4 4" stroke-width="3"/>
                    <path class="f" d="M17 181h6l-3 3z"/>
                    <path d="M17 219v-20h-3l6-8 6 8h-3v20zM14 205q-10 3-4 7 10 5 22 0 6-5-6-7M11 209l-4 4 5 3"/>
                    <path class="f" d="M17 228h6l-3 3z"/><path d="M3 237.500h34"/>
                    <path d="M6 244h7v7H6zM16 244h7v7h-7zM26 244h7v7h-7zM6 255h19v17H6z"/><path class="f" d="M11 258l9 5-9 5z"/>
                    <circle cx="33" cy="287" r="4"/><path d="M31 287h4"/></svg>
            </div>
            <span class="hint">JOIN</span>
            <div class="command">
                <span class="grip"></span>
                <button aria-label="关闭"><svg width="12" height="12"><path stroke="#fff" stroke-width="3" d="M1 1l10 10M11 1L1 11"/></svg></button>
                <button aria-label="自定义"><svg width="20" height="20"><path fill="none" stroke="#e4e6ee" stroke-width="4" d="M8 8l10 10"/><path fill="#e4e6ee" d="M1 4l4 3 3-2-2-4q6 0 6 5-1 6-7 5-5-2-4-7z"/></svg></button>
                <label class="prompt">
                    <svg width="10" height="8"><path fill="#7ab0fb" d="M1 0l3 3h2l3-3v8L6 5H4L1 8z"/></svg><i class="caret small grey"></i>
                    <b>JOIN</b><input type="text" value="选择源对象或要一次合并的多个对象:" aria-label="命令行">
                    <i class="caret small black up"></i>
                </label>
            </div>
        </main>

        <div class="toolbar right">
            <button aria-label="删除"><svg><use href="#erase"/></svg></button>
            <button aria-label="复制"><svg><use href="#copy"/></svg></button>
            <button aria-label="镜像"><svg><use href="#mirror"/></svg></button>
            <button aria-label="偏移"><svg><use href="#offset"/></svg></button>
            <button aria-label="阵列"><svg><use href="#array"/></svg></button>
            <button aria-label="移动"><svg><use href="#move"/></svg></button>
            <button aria-label="旋转"><svg><use href="#rotate"/></svg></button>
            <button aria-label="缩放"><svg><use href="#scale"/></svg></button>
            <button aria-label="拉伸"><svg><use href="#stretch"/></svg></button>
            <button aria-label="修剪"><svg><use href="#trim"/></svg></button>
            <button aria-label="延伸"><svg><use href="#extend"/></svg></button>
            <button aria-label="打断于点"><svg><use href="#breakpt"/></svg></button>
            <button aria-label="打断"><svg><use href="#break"/></svg></button>
            <button aria-label="合并"><svg><use href="#join"/></svg></button>
            <button aria-label="倒角"><svg><use href="#chamfer"/></svg></button>
            <button aria-label="圆角"><svg><use href="#fillet"/></svg></button>
            <button aria-label="光顺曲线"><svg><use href="#blend"/></svg></button>
            <button aria-label="分解"><svg><use href="#explode"/></svg></button>
        </div>
    </div>

    <div class="layout-row">
        <button class="layout-tab selected"><svg viewBox="0 0 70 22" preserveAspectRatio="none"><path fill="url(#modelOn)" d="M0 0Q8 3 11 12q2 10 7 10H54q8-1 9-10 1-9 7-12z"/></svg><span>模型</span></button>
        <button class="layout-tab"><svg viewBox="0 0 70 22" preserveAspectRatio="none"><path fill="url(#tabOff)" d="M0 0q2 20 10 21H58q8-2 12-21z"/></svg><span>布局1</span></button>
        <button class="layout-tab"><svg viewBox="0 0 70 22" preserveAspectRatio="none"><path fill="url(#tabOff)" d="M0 0q2 20 10 21H58q8-2 12-21z"/></svg><span>布局2</span></button>
        <button class="layout-add" aria-label="新布局"><svg width="28" height="20"><path fill="#4a4a4a" stroke="#666" d="M1 19Q2 3 8 1h19q-1 14-7 18z"/><path stroke="#bbb" stroke-width="2" d="M9 10h10M14 5v10"/></svg></button>
        <div class="coords">
            <button>比例 1:100<i class="caret"></i></button>
            <output>74385.3088, 7793.4523, 0.0000</output>
        </div>
        <div class="tray"></div>
    </div>

    <footer class="status">
        <div class="group">
            <button class="on end" aria-label="捕捉"><svg><path d="M1 5h9M5.500 1v9M8 12h12v5H8z"/><path fill="#1e90ff" d="M8 12h12v5H8z"/></svg></button>
            <button class="on" aria-label="正交"><svg><path d="M3 2v15h16M3 12h5v5"/></svg></button>
            <button aria-label="极轴"><svg><circle cx="9" cy="10" r="8"/><path d="M9 10h11M9 10l7-6M16 7l4 3-4 3"/></svg></button>
            <button class="drop" aria-label="极轴列表"><i class="caret"></i></button>
            <button aria-label="等轴测"><svg><path d="M0 2l20 17M10-2v24"/></svg></button>
            <button class="drop end" aria-label="等轴测列表"><i class="caret"></i></button>
            <button class="on" aria-label="对象捕捉追踪"><svg><path d="M16 2L1 18h19"/><circle cx="8" cy="10" r="1.500"/></svg></button>
            <button class="on" aria-label="对象捕捉"><svg><path d="M3 4h15v14H3z"/><path class="dot" d="M1 1h6v6H1z"/></svg></button>
            <button class="drop end" aria-label="捕捉列表"><i class="caret"></i></button>
            <button class="end" aria-label="线宽"><svg><path d="M0 2h20M0 7h12M0 12h20M0 17h12" stroke-width="3"/></svg></button>
            <button class="end" aria-label="透明度"><svg><path fill="#bdbdbd" stroke="none" d="M1 1h18v18H1z"/><path stroke="#4b4b4b" stroke-width="2" stroke-dasharray="2 2" d="M2 4h16M4 8h14M2 12h16M4 16h14"/></svg></button>
            <button class="end" aria-label="选择循环"><svg><path d="M1 4h6M4 1v6M5 9V5h10"/><path fill="#8fbf73" stroke="none" d="M8 8h11v12H8z"/></svg></button>
            <button class="on" aria-label="三维对象捕捉"><svg><path d="M10 2l8 4v9l-8 4-8-4V6zM2 6l8 4 8-4M10 10v9"/><path class="dot" d="M1 1h6v6H1z"/></svg></button>
            <button class="drop" aria-label="三维捕捉列表"><i class="caret"></i></button>
        </div>
        <div class="group">
            <button class="on" aria-label="动态 UCS"><svg><path d="M2 2v16h17M2 18L12 8M16 1l-6 6h6l-5 5"/></svg></button>
            <button aria-label="选择过滤"><svg><path d="M10 1l8 4v10l-8 4-8-4V5zM2 5l8 4 8-4M10 9v10"/></svg></button>
            <button class="drop" aria-label="过滤列表"><i class="caret"></i></button>
            <button aria-label="小控件"><svg><path d="M10 2l7 4v8l-7 4-7-4V6z"/><path stroke="#3d74d8" d="M10 2v7"/><path stroke="#d8402c" d="M11 11l7 4"/><circle cx="10" cy="2" r="1.500" stroke="#3d74d8"/><circle cx="18" cy="16" r="1.500" stroke="#d8402c"/><circle cx="3" cy="16" r="1.500" stroke="#3aa53a"/></svg></button>
            <button class="drop" aria-label="小控件列表"><i class="caret"></i></button>
        </div>
        <div class="group">
            <button class="on" aria-label="注释可见性"><svg><path class="fill" d="M8 2q2-3 3 1v8l8 7v1H13l-3-4-4 4H0l7-8z"/><circle cx="14" cy="5" r="4"/></svg></button>
            <button aria-label="自动缩放"><svg><path class="fill" d="M8 2q2-3 3 1v8l8 7v1H13l-3-4-4 4H0l7-8zM18 0l-6 5h3l-2 5 7-6h-4z"/></svg></button>
            <button aria-label="注释比例"><svg><path class="fill" d="M8 2q2-3 4 0v9l7 7v1H14l-4-3-4 3H0v-1l8-7z"/></svg></button>
            <button class="text scale">1:1 / 100%<i class="caret"></i></button>
        </div>
        <div class="group">
            <button aria-label="设置"><svg><circle cx="10" cy="10" r="5" stroke-width="4"/><path stroke-width="3" d="M10 1v3M10 16v3M1 10h3M16 10h3M4 4l2 2M16 4l-2 2M4 16l2-2M16 16l-2-2"/></svg></button>
            <button class="text space end">草图与注释<i class="caret"></i></button>
            <button aria-label="添加"><svg><path stroke-width="2" d="M10 1v18M1 10h18"/></svg></button>
        </div>
        <div class="group">
            <button aria-label="单位"><svg><path class="fill" d="M7 1h6v2h-2v2h2v2h-2v2h2v2h-2v2h2v6H7z"/></svg></button>
            <button class="text units end">小数<i class="caret"></i></button>
            <button class="on" aria-label="快捷特性"><svg><path d="M5 3h10v13H5zM5 6h10M9 6v10M5 9h10M5 13h10"/></svg></button>
        </div>
        <div class="group">
            <button class="on" aria-label="锁定界面"><svg><path d="M1 2h16v13H1zM1 5h16"/><path fill="#1e90ff" d="M12 12h8v6h-8z"/><path d="M14 12V9h4v3"/></svg></button>
            <button class="drop end" aria-label="锁定列表"><i class="caret"></i></button>
            <button aria-label="隔离对象"><svg><path d="M1 1h8v7H1zM5 17l3-6 4 6z"/><circle cx="14" cy="9" r="4"/></svg></button>
            <button class="on" aria-label="编组"><svg><path stroke-dasharray="2 1" d="M1 1h18v18H1z"/><path d="M5 5h7v7H5zM9 9h7v7H9z"/></svg></button>
            <button aria-label="基线"><svg><path d="M1 7h18M1 13h18"/></svg></button>
            <button class="off" aria-label="填充"><svg><path stroke-dasharray="1 1" d="M1 5h18M2 7h18M1 9h18M2 11h18M1 13h18M2 15h18"/></svg></button>
            <button aria-label="加粗"><svg><path stroke-width="2" d="M1 5h18M1 15h18"/></svg></button>
            <button class="off" aria-label="动态标注"><svg><path d="M6 4h13M6 10h13M6 16h13M1 2h4M3 0v4M1 13l3 3"/></svg></button>
        </div>
        <div class="group">
            <button class="on" aria-label="图形性能"><svg><circle cx="10" cy="10" r="9" fill="#0f4f9c"/><path d="M9 13l6-6" stroke-width="2"/></svg></button>
        </div>
        <div class="group">
            <button class="narrow" aria-label="清理"><svg><path fill="#e8eaf0" stroke="none" d="M3 2h10l3 4v7H3z"/><path fill="#e9c91c" stroke="none" d="M2 11h8v7H2z"/><path stroke="#2f62b8" stroke-width="3" d="M6 8h10"/><path stroke="#3fa520" stroke-width="3" d="M9 13l4 4 6-8"/></svg></button>
        </div>
        <div class="group">
            <button aria-label="全屏显示"><svg><path d="M1 3h18v14H1zM5 13l4-3M5 9v4h4M15 7l-4 3M15 11V7h-4"/></svg></button>
            <button aria-label="自定义"><svg><path stroke-width="2" d="M1 4h18M1 10h18M1 16h18"/></svg></button>
        </div>
    </footer>
</div>

<svg class="watermark" viewBox="0 0 260 124" aria-hidden="true">
    <g class="paw">
        <ellipse cx="99" cy="34" rx="9" ry="12"/><ellipse cx="117" cy="16" rx="9" ry="12.500"/><ellipse cx="140" cy="18" rx="9" ry="12"/><ellipse cx="154" cy="40" rx="9" ry="12"/>
        <path d="M126 36q8 0 14 9 5 7 12 14 8 10 4 18-4 8-14 7-16-2-32 0-12 0-15-8-3-9 6-18 7-7 11-14 6-8 14-8z"/>
    </g>
    <text class="bai" x="0" y="82">Bai</text>
    <text class="du" x="105" y="75">du</text>
    <text class="jy" x="165" y="75">经验</text>
    <text class="url" x="4" y="114">jingyan.baidu.com</text>
</svg>

<div class="ime">
    <svg class="logo" width="40" height="36"><path fill="#ee4a1c" d="M4 7q0-3 3-3l22-4q3 0 4 3l4 20q0 3-3 4L14 32q-3 0-4-3z"/><path fill="none" stroke="#fff" stroke-width="5" d="M31 7q-22-1-20 5 1 3 11 3 9 1 8 5-2 6-19 5"/></svg>
    <span>英</span>
    <svg width="14" height="20"><circle cx="4" cy="5" r="2.500" fill="#1d6fc9"/><path stroke="#1d6fc9" stroke-width="3" d="M11 8v3l-2 4"/></svg>
    <svg width="20" height="20"><circle cx="10" cy="10" r="9" fill="none" stroke="#1d6fc9" stroke-width="2"/><path fill="none" stroke="#1d6fc9" stroke-width="2" d="M7 5v4M13 5v4M5 11q5 6 10 0"/></svg>
    <svg width="16" height="20"><rect x="4" y="0" width="8" height="12" rx="4" fill="#1d6fc9"/><path fill="none" stroke="#1d6fc9" stroke-width="2" d="M1 8q0 7 7 7t7-7M8 15v4M4 19h8"/></svg>
    <svg width="18" height="20"><path fill="none" stroke="#1d6fc9" stroke-width="3" d="M1 17h5q-5-4-4-9 2-6 8-6t7 6q0 5-4 9h5"/></svg>
</div>
</body>
</html>
```

FILE: styles.css
```css
*{
    box-sizing: border-box;
    margin: 0;
    padding: 0;
}
body{
    height: 100vh;
    padding: 0 7px 7px;
    position: relative;
    overflow: hidden;
    font: 15px/20px "Noto Sans", "Noto Sans CJK SC", sans-serif;
    color: #fff;
    background:
        linear-gradient(#b3720f 0 16px, #e9eef5 16px 190px, #444 198px 212px, #000 212px 356px, #555 356px 400px, #000 400px 566px, #f2f2f2 578px 740px, #444 740px 784px, #000 784px 870px, #0a6fd0 870px 876px, #f0f0f0 876px 902px, #000 904px 926px, #eee 942px 980px, #7c5119 980px) left top / 7px 1030px no-repeat,
        linear-gradient(#7a3c05, #a35a0c 90px, #7d4706 220px, #b5833f 340px, #c09558 655px, #3a2410 665px, #4a2c11 900px, #2a1a0d) right top / 7px 1030px no-repeat,
        #2b231d;
}
button{
    border: 0;
    background: none;
    color: inherit;
    font: inherit;
    display: flex;
    align-items: center;
    justify-content: center;
    white-space: nowrap;
}
svg{
    display: block;
    flex: none;
}
.sprite{
    position: absolute;
    width: 0;
    height: 0;
}
.window{
    height: 100%;
    display: flex;
    flex-direction: column;
    border: 1px solid #fff;
    border-top: 0;
    background: #5b5b5b;
}

/* icon strokes and fills */
.w{
    fill: none;
    stroke: #b8b8b8;
    stroke-width: 2;
}
.b{
    fill: none;
    stroke: #6e9ce4;
    stroke-width: 2;
}
.s{
    fill: url(#silver);
    stroke: #444;
}
.h{
    fill: #24406e;
    stroke: #6fa0ee;
    stroke-width: 1.5;
}
.caret{
    width: 0;
    height: 0;
    border: 5px solid transparent;
    border-top-color: #fff;
    border-bottom: 0;
}
.caret.small{
    border-width: 4px 3px 0;
}
.caret.dark{
    border-top-color: #333a4a;
}
.caret.dim{
    border-top-color: #aaa;
}
.caret.grey{
    border-width: 5px 4px 0;
    border-top-color: #888;
}
.caret.black{
    border-top-color: #000;
}
.caret.up{
    border-width: 5px 5px 0;
    transform: rotate(180deg);
}

/* title bar */
.titlebar{
    position: relative;
    display: flex;
    height: 38px;
    flex: none;
    padding-top: 8px;
    color: #000;
    background: linear-gradient(#cfcfcf, #fff) right top / 314px 5px no-repeat #fff;
}
.app-button{
    position: absolute;
    left: 0;
    top: 8px;
    z-index: 2;
    width: 51px;
    height: 51px;
    padding: 0 3px 10px;
    gap: 1px;
    border: 1px solid #111;
    background: linear-gradient(#a5a5a5, #6c6c6c);
}
.qat, .info{
    display: flex;
    border: 1px solid #666;
    border-width: 1px 1px 0 0;
    color: #fff;
    background: linear-gradient(#9b9b9b, #5e5e5e);
}
.qat{
    width: 281px;
    margin-left: 51px;
    padding-left: 5px;
}
.qat button{
    width: 30px;
}
.qat .drop{
    width: 16px;
}
.qat .qat-more{
    margin-left: 6px;
    border-left: 1px solid #999;
}
.title{
    flex: 1;
    padding-left: 16px;
    font-size: 15px;
    font-weight: normal;
    line-height: 22px;
    text-align: center;
}
.info{
    width: 557px;
}
.info button{
    width: 30px;
    padding-bottom: 2px;
}
.info .info-toggle{
    width: 17px;
}
.info input{
    width: 225px;
    padding: 0 4px 3px;
    border: 1px solid #333;
    background: #707070;
    color: #fff;
    font: italic 14px "Noto Sans", "Noto Sans CJK SC", sans-serif;
}
.info input::placeholder{
    color: #c8c8c8;
}
.info .login{
    flex: 1;
    gap: 7px;
    padding: 0 7px 2px 4px;
}
.login .caret{
    margin-left: auto;
}
.info .drop{
    width: 14px;
}
.info .help{
    width: 38px;
    margin-left: 8px;
    padding-left: 6px;
    border-left: 1px solid #999;
}
.winbtns{
    display: flex;
    width: 207px;
    padding: 0 2px 8px 31px;
}
.winbtns button{
    flex: 1;
}

/* ribbon */
.ribbon-tabs{
    display: flex;
    flex: none;
    height: 25px;
    padding-left: 56px;
    border-top: 1px solid #2c2c2c;
    background: #535353;
}
.ribbon-tabs button{
    padding: 0 12px 2px;
    color: #dadada;
}
.ribbon-tabs .selected{
    margin: 2px 1px 0;
    padding: 0 10px 4px;
    border: 1px solid #333;
    border-width: 1px 1px 0;
    color: #fff;
    background: #6a6a6a;
}
.ribbon-tabs .fold{
    gap: 8px;
    margin-left: 20px;
}
.ribbon{
    display: flex;
    flex: none;
    height: 124px;
    border-top: 1px solid #2c2c2c;
    border-bottom: 2px solid #2c2c2c;
    background: #444;
}
.panel{
    display: flex;
    flex-direction: column;
    border-right: 2px solid #444;
    background: #5b5b5b;
}
.draw{
    width: 265px;
}
.modify{
    width: 166px;
}
.annotate{
    width: 158px;
}
.layers{
    width: 315px;
}
.blocks{
    width: 100px;
}
.tools{
    display: flex;
    flex: 1;
    padding-top: 2px;
}
.draw .tools{
    padding-left: 2px;
}
.annotate .tools{
    padding-left: 6px;
}
.blocks .tools{
    padding-left: 2px;
}
.big{
    flex-direction: column;
    justify-content: flex-start;
    align-self: flex-start;
    width: 51px;
    padding-top: 4px;
}
.big svg{
    margin-bottom: 6px;
}
.big .caret{
    margin-top: 5px;
}
.small-grid, .layer-grid{
    display: grid;
    align-content: start;
}
.small-grid{
    grid-auto-rows: 31px;
    grid-template-columns: 22px 24px;
    margin-left: 5px;
}
.draw .small-grid{
    margin-left: 9px;
}
.modify .small-grid{
    grid-template-columns: 36px 36px 22px 30px 20px;
    margin-left: 7px;
}
.small-grid button{
    justify-content: flex-start;
}
.small-grid .drop{
    width: 24px;
    justify-content: center;
}
.small-grid svg, .layer-grid svg, .toolbar svg, .status svg{
    width: 20px;
    height: 20px;
}
.layer-tools{
    padding-top: 2px;
}
.layer-box{
    display: flex;
    align-items: center;
    width: 260px;
    height: 28px;
    margin-bottom: 3px;
    padding: 0 2px 0 7px;
    border: 1px solid #333;
    background: linear-gradient(#5d5d5d, #777);
}
.layer-box select{
    flex: 1;
    appearance: none;
    border: 0;
    background: none;
    color: #fff;
    font: inherit;
}
.layer-grid{
    grid-auto-rows: 30px;
    grid-template-columns: repeat(5, 30px);
}
.panel-title{
    height: 22px;
    gap: 9px;
    background: #4d4d4d;
}
.folded{
    flex-direction: column;
    justify-content: flex-start;
    width: 75px;
    margin-right: 1px;
    padding: 5px 0 5px;
    border: 1px solid #333;
    background: linear-gradient(#707070, #4c4c4c);
}
.folded svg{
    margin-bottom: 5px;
}
.folded.short svg{
    margin-bottom: 3px;
}
.folded .caret{
    margin-top: auto;
}

/* drawing tabs */
.doc-tabs{
    display: flex;
    flex: none;
    align-items: flex-end;
    height: 36px;
    padding-left: 16px;
    border-bottom: 5px solid #5b5b5b;
    background: #383838;
}
.doc-tab{
    position: relative;
    width: 166px;
    height: 27px;
    margin-right: -12px;
    padding-left: 24px;
    justify-content: flex-start;
    color: #b5b5b5;
}
.doc-tab.selected{
    width: 170px;
    color: #fff;
}
.doc-tab svg:first-child, .layout-tab svg{
    position: absolute;
    left: 0;
    top: 0;
    width: 100%;
    height: 100%;
}
.doc-tab span, .layout-tab span{
    position: relative;
}
.doc-tab .x{
    position: relative;
    width: 10px;
    height: 10px;
    margin: 0 21px 0 auto;
}
.doc-add{
    margin: 0 0 3px 15px;
}

/* work area */
.work{
    display: flex;
    flex: 1;
    min-height: 0;
}
.palettes{
    display: flex;
    flex-direction: column;
    gap: 8px;
    width: 31px;
    padding: 7px 3px 6px 2px;
}
.palette{
    position: relative;
    flex: 1;
    display: flex;
    align-items: center;
    justify-content: center;
    border: 1px solid #3a3a3a;
    border-radius: 3px;
    background: linear-gradient(90deg, #8e8e8e, #666);
}
.palette::before, .toolbar::before{
    content: "";
    position: absolute;
    left: 6px;
    top: 2px;
    width: 12px;
    height: 4px;
    background: radial-gradient(circle, #222 1px, transparent 1px) 0 0 / 2px 2px;
}
.palette span{
    writing-mode: vertical-rl;
    text-orientation: sideways;
    transform: rotate(180deg);
    white-space: nowrap;
}
.toolbar{
    position: relative;
    flex: none;
    align-self: flex-start;
    width: 31px;
    border: 1px solid #333;
    padding-top: 10px;
    background: linear-gradient(#4e4e4e 10px, #5b5b5b 10px);
}
.toolbar::before{
    left: 3px;
}
.toolbar button{
    width: 28px;
    height: 28px;
}
.toolbar.left{
    margin-right: 4px;
}
.toolbar.right{
    margin: 0 3px 0 4px;
}
.canvas{
    flex: 1;
    position: relative;
    min-width: 0;
    overflow: hidden;
    background: #000;
}
.drawing{
    width: 100%;
    height: 100%;
}
.green, .red, .wall, .cyan, .white, .tick{
    fill: none;
    stroke: #00d800;
}
.red{
    stroke: #e00000;
}
.wall{
    stroke: #a8a8a8;
}
.cyan{
    stroke: #00e5e5;
}
.white{
    stroke: #fff;
}
.tick{
    stroke: #0f0;
    stroke-width: 2;
}
.dims{
    fill: #fff;
    font: 11px Roboto, sans-serif;
    text-anchor: middle;
}
.bubbles{
    fill: #fff;
    font: 21px "Liberation Serif", serif;
    text-anchor: middle;
}
.mark ellipse{
    fill: none;
    stroke: #ff1e12;
    stroke-width: 4;
}
.mark path{
    fill: #ff1e12;
}
.view-label{
    position: absolute;
    left: 4px;
    top: 5px;
}
.tip{
    position: absolute;
    left: 1021px;
    top: 410px;
    width: 264px;
    height: 27px;
    padding: 1px 3px;
    color: #000;
    background: #999;
    mix-blend-mode: lighten;
    white-space: nowrap;
}
.view-btns{
    position: absolute;
    right: 12px;
    top: 11px;
    display: flex;
    gap: 11px;
}
.navbar{
    position: absolute;
    right: 4px;
    top: 32px;
    border-radius: 4px;
    background: #404040;
}
.navbar svg{
    fill: none;
    stroke: #2d2d2d;
    stroke-width: 1.5;
}
.navbar .f{
    fill: #2d2d2d;
}
.hint{
    position: absolute;
    left: 75px;
    bottom: 38px;
    padding: 0 3px;
    border-radius: 2px;
    color: #ccc;
    background: #484848;
    font: 14px/19px "DejaVu Sans Mono", monospace;
}
.command{
    position: absolute;
    left: 0;
    bottom: 0;
    display: flex;
    width: 551px;
    height: 33px;
    border: 1px solid #666;
    border-radius: 3px 3px 0 0;
    background: linear-gradient(#777, #3c3c3c);
}
.command .grip{
    width: 8px;
    margin: 5px 0 5px 3px;
    background: radial-gradient(circle, #bbb 1px, transparent 1px) 0 0 / 4px 4px;
}
.command button{
    width: 28px;
}
.prompt{
    display: flex;
    flex: 1;
    align-items: center;
    gap: 6px;
    padding: 0 5px 0 11px;
    color: #000;
    background: #fff;
}
.prompt b{
    margin-left: 3px;
    font: bold 15px "DejaVu Sans Mono", monospace;
}
.prompt input{
    flex: 1;
    min-width: 0;
    border: 0;
    outline: 0;
    padding-bottom: 2px;
    font: 16px "Noto Sans", "Noto Sans CJK SC", sans-serif;
}

/* layout tabs and coordinates */
.layout-row{
    display: flex;
    flex: none;
    height: 36px;
    padding-left: 10px;
    border-top: 1px solid #5b5b5b;
    background: #383838;
}
.layout-tab{
    position: relative;
    width: 70px;
    height: 22px;
    margin-right: -2px;
    color: #b5b5b5;
}
.layout-tab.selected{
    z-index: 1;
    width: 66px;
    color: #fff;
    font-weight: bold;
}
.layout-add{
    height: 22px;
    margin-left: 6px;
}
.coords{
    display: flex;
    width: 432px;
    height: 33px;
    margin: 1px 1px 0 auto;
    border: 1px solid #6e6e6e;
    background: #4b4b4b;
    font-size: 14px;
}
.coords button{
    width: 87px;
    gap: 4px;
    padding-right: 3px;
    border-right: 1px solid #6e6e6e;
}
.coords output{
    padding: 5px 11px;
}
.tray{
    width: 34px;
    height: 33px;
    margin-top: 1px;
    border: 1px solid #6e6e6e;
    background: #4b4b4b;
}

/* status bar */
.status{
    display: flex;
    flex: none;
    gap: 1px;
    height: 35px;
    padding: 0 0 2px 26px;
    background: #383838;
}
.group{
    display: flex;
    border: 1px solid #6e6e6e;
    background: #4b4b4b;
}
.status button{
    box-sizing: content-box;
    width: 30px;
    color: #fff;
}
.status button.drop{
    width: 19px;
}
.status button.narrow{
    width: 28px;
}
.status .end{
    border-right: 1px solid #6e6e6e;
}
.status svg{
    fill: none;
    stroke: #b5b5b5;
    stroke-width: 1.5;
    overflow: visible;
}
.status .on svg{
    stroke: #1e90ff;
    filter: drop-shadow(0 0 2px #0a5fd0);
}
.status .off svg{
    stroke: #7a7a7a;
}
.status .fill{
    fill: #b5b5b5;
    stroke: none;
}
.status .on .fill{
    fill: #1e90ff;
}
.status .dot{
    fill: #0c0;
    stroke: #031;
}
.status button.text{
    justify-content: space-between;
    padding: 0 5px;
}
.status button.scale{
    width: 81px;
    font-size: 14px;
}
.status button.space{
    width: 90px;
}
.status button.units{
    width: 80px;
}

/* overlays above the window */
.watermark{
    position: absolute;
    right: 72px;
    bottom: 29px;
    width: 260px;
    height: 124px;
    fill: #dcdcdc;
    opacity: .82;
}
.watermark .bai{
    font: 800 56px "Open Sans", sans-serif;
}
.watermark .du{
    fill: #000;
    font: bold 36px "Noto Sans", sans-serif;
}
.watermark .jy{
    font: 900 43px "Noto Sans CJK SC", sans-serif;
}
.watermark .url{
    font: 29px "Noto Sans", sans-serif;
}
.ime{
    position: absolute;
    right: 0;
    bottom: 57px;
    display: flex;
    align-items: center;
    gap: 10px;
    height: 28px;
    width: 153px;
    background: #fff;
    color: #1d6fc9;
    font: bold 18px/28px "Noto Sans CJK SC", sans-serif;
}
.ime .logo{
    margin: 0 -7px 0 -17px;
}
```
